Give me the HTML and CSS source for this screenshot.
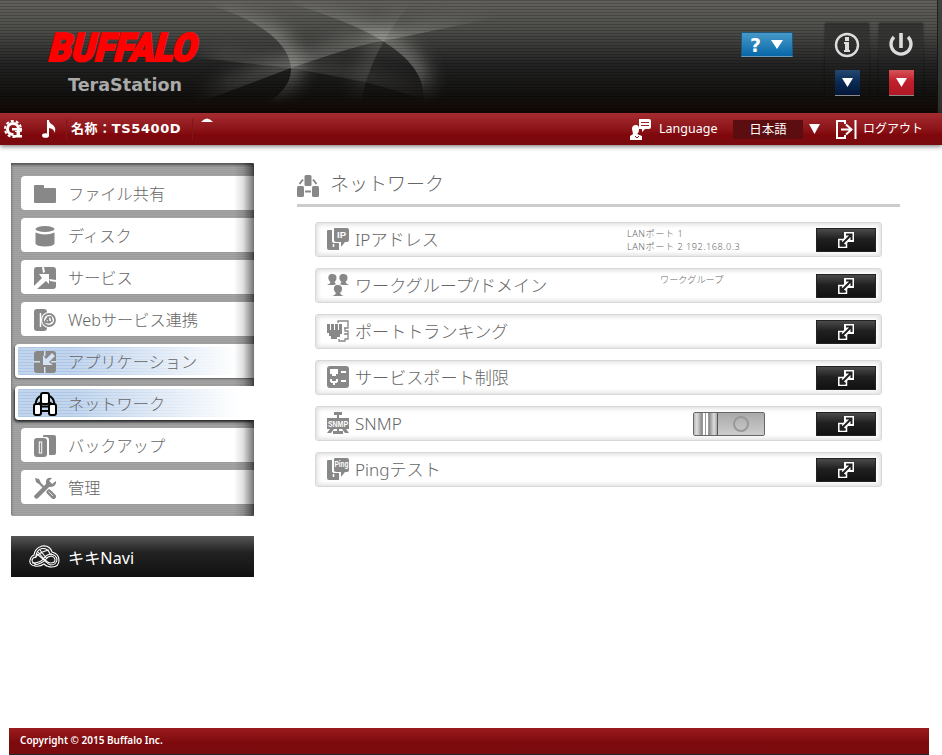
FILE: index.html
```html
<!DOCTYPE html>
<html lang="ja">
<head>
    <meta charset="UTF-8">
    <title>TeraStation</title>
    <link rel="stylesheet" href="styles.css">
</head>
<body>

<!-- Icon set -->
<svg class="sprite" width="0" height="0">
    <symbol id="i-folder" viewBox="0 0 22 22"><path d="M0 3q0-1 1-1h8q1 0 1 1v2h11q1 0 1 1v13q0 1-1 1H1q-1 0-1-1z"/></symbol>
    <symbol id="i-disk" viewBox="0 0 22 22"><ellipse cx="11" cy="4" rx="9.5" ry="3"/><path d="M1.500 7.500q9.500 4 19 0v11q-1 3-9.500 3t-9.500-3z"/></symbol>
    <symbol id="i-service" viewBox="0 0 22 22"><rect width="22" height="22" rx="3"/><path fill="#fff" d="M5 7h10v10l-3-3-9 8H0v-3l8-8zM8 0h2l1 5-2 1zM15 12l7 1v2l-6-1z"/></symbol>
    <symbol id="i-web" viewBox="0 0 22 22"><rect width="13" height="22" rx="3"/><path d="M6.500 4v14" stroke="#fff" stroke-width="1.500"/><circle cx="15" cy="11" r="8" fill="#fff"/><circle cx="15" cy="11" r="6" fill="none" stroke="#888" stroke-width="1.800"/><path d="M11 13l3-5 3 0 1 4-3 2zM14 8l1 6M11 13h4" fill="none" stroke="#888" stroke-width="1.600"/></symbol>
    <symbol id="i-app" viewBox="0 0 22 22"><rect width="22" height="22" rx="3"/><path fill="#d5e2f2" d="M9 4v10h10l-4-3 6-6-3-3-6 6zM10 0h1.500v5H10zM0 10h6v1.500H0zM10 16h1.500v6H10zM17 10h5v1.500h-5z"/></symbol>
    <symbol id="i-network" viewBox="0 0 22 22"><rect x="7.500" width="7" height="11" rx="1.500"/><rect y="11" width="7" height="11" rx="1.500"/><rect x="15" y="11" width="7" height="11" rx="1.500"/><path d="M6 4.500L2.500 9M16 4.500L19.500 9M8 16.500h6" fill="none" stroke="#888" stroke-width="2"/></symbol>
    <symbol id="i-network-on" viewBox="0 0 24 24"><path d="M7 4Q2 8 3 13M17 4q5 4 4 9M8 14.500h8M8 19h8M5 12l4-2M19 12l-4-2" fill="none" stroke="#000" stroke-width="2"/><g fill="#fff" stroke="#000" stroke-width="2"><rect x="8" y="1" width="8" height="11" rx="2"/><rect x="1" y="12" width="7" height="11" rx="2"/><rect x="16" y="12" width="7" height="11" rx="2"/></g></symbol>
    <symbol id="i-backup" viewBox="0 0 22 22"><path d="M9 1q0-1 1-1h10q2 0 2 2v16q0 2-2 2h-5V5q0-3-3-3H9z"/><rect y="3" width="13" height="19" rx="3"/><rect x="5.300" y="7" width="2.400" height="11" fill="none" stroke="#fff"/></symbol>
    <symbol id="i-tools" viewBox="0 0 22 22"><path d="M1 1l4 1 2 4 5 5-1.500 1.500-5-5L2 5z"/><path d="M15 15l4.500 4.500" stroke="#888" stroke-width="5" stroke-linecap="round"/><path d="M14.500 14.500l4.500 4.500" stroke="#fff" stroke-width=".8"/><path d="M2.500 19.500L15 7" stroke="#888" stroke-width="4.500" stroke-linecap="round"/><path d="M18 1q-5-1-6 3-1 5 4 6 5 0 6-4V4l-4 3-3-3z"/></symbol>
    <symbol id="i-ip" viewBox="0 0 22 22"><path d="M0 3q0-1 1-1h4v12h7v8H2q-2 0-2-2z"/><path d="M8 0h12q2 0 2 2v10q0 2-2 2h-2l-4 5v-5H9q-2 0-2-2V1q0-1 1-1z"/><path d="M6 2v12.500h6.500V20" fill="none" stroke="#fff"/><path d="M6.500 16v3" stroke="#fff" stroke-width="1.500"/></symbol>
    <symbol id="i-group" viewBox="0 0 22 22"><g id="person"><path d="M5.500 0C2 0 1 2 1.500 5q.5 2 2 3-.5 2-3.500 3h11q-3-1-3.500-3Q10 6 9.500 3 9 0 5.500 0z"/></g><use href="#person" x="11"/><path d="M4 22V14q2-4 7-4t7 4v8z" fill="#fff"/><use href="#person" x="5.500" y="11"/></symbol>
    <symbol id="i-trunk" viewBox="0 0 22 22"><path d="M0 4h3v6h1V4h3v6h1V4h3v6h1V4h3v10h-2v3h-3v2H4v-3H2v-3H0z"/><path d="M11 3V1h10v7h-3v3h3v8h-3v2h-6v-2M17 8h4M17 14h4" fill="none" stroke="#888" stroke-width="1.300"/></symbol>
    <symbol id="i-port" viewBox="0 0 22 22"><rect width="22" height="22" rx="3"/><path fill="#fff" d="M3 3h8v5H9v2H5V8H3zM3 13h2v3H3zM9 13h2v3H9zM4 15h6v2H8v2H6v-2H4zM14 5h5v2h-5zM14 14h5v2h-5z"/></symbol>
    <symbol id="i-snmp" viewBox="0 0 22 22"><path d="M7 0h8v3h-3v3H10V3H7zM0 6h22v11H0zM10 17h2v2h4v3H6v-3h4zM3 17h4l-3 4H0zM15 17h4l3 4h-4z"/></symbol>
    <symbol id="i-open" viewBox="0 0 16 16"><path d="M.8 7.500h7.700v7.700H.8z" fill="none" stroke="#fff" stroke-width="1.500"/><path d="M6 0h10v10H10L7 13 3.500 9.500 6 6z" fill="#fff"/><path d="M3.500 9l4 4-1 1.500H2V9z" fill="#222"/><path d="M8 2.500h5.500V8M13 3L4 12" fill="none" stroke="#222" stroke-width="2"/></symbol>
</svg>

<header class="header">
    <svg class="header-art" width="942" height="113" viewBox="0 0 942 113">
        <defs>
            <filter id="glow" filterUnits="userSpaceOnUse" x="100" y="-60" width="500" height="240"><feGaussianBlur stdDeviation="11"/></filter>
            <linearGradient id="fade" x1="0" x2="0" y1="0" y2="1"><stop offset="0" stop-color="#fff" stop-opacity=".1"/><stop offset=".3" stop-color="#fff"/><stop offset=".6" stop-color="#fff"/><stop offset=".93" stop-color="#000"/></linearGradient>
            <linearGradient id="sides" gradientUnits="userSpaceOnUse" x1="190" x2="500" y1="0" y2="0"><stop offset="0"/><stop offset=".12" stop-opacity="0"/><stop offset=".75" stop-opacity="0"/><stop offset="1"/></linearGradient>
            <mask id="fademask" maskUnits="userSpaceOnUse" x="0" y="0" width="942" height="113"><rect width="942" height="113" fill="url(#fade)"/><rect width="942" height="113" fill="url(#sides)"/></mask>
            <clipPath id="c1"><path d="M205 4C262 20 291 45 291 70Q290 90 265 104V113H560V-20H205z"/></clipPath>
            <clipPath id="c2"><path d="M293 4C370 28 424 55 424 98L423 113H600V-20H293z"/></clipPath>
            <clipPath id="c3"><path d="M190 106L291 68Q360 44 383 41L500 17V-20H190z"/></clipPath>
            <clipPath id="c4"><path d="M190 57L291 68 365 82 424 99V-20H190z"/></clipPath>
            <clipPath id="c5"><path d="M410 4Q368 55 361 104H200V0z"/></clipPath>
        </defs>
        <g mask="url(#fademask)" fill="none" stroke="#c6c6c0" stroke-width="12">
            <g clip-path="url(#c1)" opacity=".85"><path filter="url(#glow)" d="M205 4C262 20 291 45 291 70Q290 90 265 104"/></g>
            <g clip-path="url(#c2)" opacity=".85"><path filter="url(#glow)" d="M293 4C370 28 424 55 424 98"/></g>
            <g clip-path="url(#c3)" opacity=".65"><path filter="url(#glow)" d="M170 112L291 68Q360 44 383 41L520 13"/></g>
            <g clip-path="url(#c4)" opacity=".4"><path filter="url(#glow)" d="M170 55L291 68 365 82 424 99"/></g>
            <g clip-path="url(#c5)" opacity=".4"><path filter="url(#glow)" d="M410 4Q368 55 361 104"/></g>
        </g>
    </svg>

    <div class="brand">
        <svg width="190" height="70" viewBox="0 0 190 70">
            <text class="logo" transform="translate(4 35) skewX(-14)" textLength="148" lengthAdjust="spacingAndGlyphs">BUFFALO</text>
            <text class="product" x="25" y="65" textLength="114" lengthAdjust="spacingAndGlyphs">TeraStation</text>
        </svg>
    </div>

    <div class="tools">
        <div class="help">
            <span>?</span>
            <svg width="12" height="9"><path d="M0 0h12L6 9z" fill="#fff"/></svg>
        </div>
        <div class="tool">
            <svg width="26" height="26" viewBox="0 0 26 26"><circle cx="13" cy="13" r="11" fill="none" stroke="#ddd" stroke-width="2.400"/><path fill="#ddd" d="M11 5h4v4h-4zM10 10h5v8h1v2h-6v-2h1v-6h-1z"/></svg>
            <div class="drop blue"><svg width="11" height="9"><path d="M0 0h11L5.500 9z" fill="#fff"/></svg></div>
        </div>
        <div class="tool">
            <svg width="26" height="26" viewBox="0 0 26 26"><path d="M6 5a10 10 0 1 0 14 0" fill="none" stroke="#ddd" stroke-width="3.300"/><path d="M13 1v15" stroke="#ddd" stroke-width="3.600"/></svg>
            <div class="drop red"><svg width="11" height="9"><path d="M0 0h11L5.500 9z" fill="#fff"/></svg></div>
        </div>
    </div>
</header>

<div class="bar">
    <svg class="gear" width="20" height="20" viewBox="0 0 20 20"><circle cx="9" cy="9" r="5.500" fill="none" stroke="#fff" stroke-width="3"/><circle cx="9" cy="9" r="8" fill="none" stroke="#fff" stroke-width="2" stroke-dasharray="3 2.030"/><path d="M8 8h10v2.500H8zM11 11h5v4h2v2.500H9V15h2z" fill="#fff"/><path d="M9.500 12h3v3h-3z" fill="#8f161a"/></svg>
    <svg class="note" width="15" height="18" viewBox="0 0 15 18"><ellipse cx="3.500" cy="15.500" rx="3.500" ry="2.300" fill="#fff"/><path d="M5 0h2q0 3 4 5 4 4 1 8 1-4-5-5v8H5z" fill="#fff"/></svg>
    <div class="name">名称：TS5400D</div>
    <svg class="bump" width="12" height="5"><path d="M0 4Q6-3 12 4z" fill="#fff"/></svg>
    <div class="bar-right">
        <svg width="21" height="21" viewBox="0 0 21 21"><path d="M9 0h10q2 0 2 2v6q0 2-2 2h-4l-3 3v-3H9z" fill="#fff"/><path d="M11 3.500h8M11 6.500h8" stroke="#9b2226"/><path d="M2 10q0-4 4-4 3 0 3 4t-2 5l5 2v4H0v-4l3-2z" fill="#fff"/><path d="M5 17l2 2 2-2" stroke="#8b1519" fill="none"/></svg>
        <span class="language">Language</span>
        <span class="select">日本語</span>
        <svg class="arrow" width="11" height="10"><path d="M0 0h11L5.500 10z" fill="#fff"/></svg>
        <svg class="exit" width="21" height="19" viewBox="0 0 21 19"><path d="M9 4V1H1v17h8v-3M5 9.500h10M10 4.500l5.500 5-5.500 5" fill="none" stroke="#fff" stroke-width="2"/><path d="M19.500 0v19" stroke="#fff" stroke-width="2"/></svg>
        <span class="logout">ログアウト</span>
    </div>
</div>

<div class="main">
    <div class="side">
        <ul class="menu">
            <li><svg><use href="#i-folder"/></svg>ファイル共有</li>
            <li><svg><use href="#i-disk"/></svg>ディスク</li>
            <li><svg><use href="#i-service"/></svg>サービス</li>
            <li><svg><use href="#i-web"/></svg>Webサービス連携</li>
            <li class="hover"><svg><use href="#i-app"/></svg>アプリケーション</li>
            <li class="active"><svg><use href="#i-network-on"/></svg>ネットワーク</li>
            <li><svg><use href="#i-backup"/></svg>バックアップ</li>
            <li><svg><use href="#i-tools"/></svg>管理</li>
        </ul>
        <div class="navi">
            <svg width="31" height="23" viewBox="0 0 31 23" fill="none" stroke="#fff" stroke-width="1.100"><path d="M6 21Q0 20 1 15q1-4 4-5Q6 3 13 1q8-1 10 6 7 2 7 8 0 7-7 7-5 0-8-3-4 3-9 2z"/><path d="M7 19q-4-1-4-4 1-3 4-3Q7 5 13 3.500 19 3 21 9q7 1 7 6-1 5-6 5-4-1-8-6l-6-5"/><path d="M3 18q9 0 12-5 3-4 8-4M5 20q8-1 12-6 2-3 6-3M9 7l7 8q3 3 6 3 4 0 4-3t-4-4M11 5l7 9M6 13q4-6 14-8"/></svg>
            キキNavi
        </div>
    </div>

    <div class="content">
        <h1><svg width="22" height="22"><use href="#i-network"/></svg>ネットワーク</h1>
        <div class="rows">
            <div class="row">
                <svg class="icon" viewBox="0 0 22 22"><use href="#i-ip"/><text x="14.500" y="10" font-size="9" textLength="9" lengthAdjust="spacingAndGlyphs">IP</text></svg>
                <span class="label">IPアドレス</span>
                <span class="info ports">LANポート 1<br>LANポート 2 192.168.0.3</span>
                <span class="button"><svg><use href="#i-open"/></svg></span>
            </div>
            <div class="row">
                <svg class="icon"><use href="#i-group"/></svg>
                <span class="label">ワークグループ/ドメイン</span>
                <span class="info">ワークグループ</span>
                <span class="button"><svg><use href="#i-open"/></svg></span>
            </div>
            <div class="row">
                <svg class="icon"><use href="#i-trunk"/></svg>
                <span class="label">ポートトランキング</span>
                <span class="button"><svg><use href="#i-open"/></svg></span>
            </div>
            <div class="row">
                <svg class="icon"><use href="#i-port"/></svg>
                <span class="label">サービスポート制限</span>
                <span class="button"><svg><use href="#i-open"/></svg></span>
            </div>
            <div class="row">
                <svg class="icon" viewBox="0 0 22 22"><use href="#i-snmp"/><text x="11" y="14.500" font-size="8.500" textLength="20" lengthAdjust="spacingAndGlyphs">SNMP</text></svg>
                <span class="label">SNMP</span>
                <span class="switch"><span class="knob"></span><span class="off"></span></span>
                <span class="button"><svg><use href="#i-open"/></svg></span>
            </div>
            <div class="row">
                <svg class="icon" viewBox="0 0 22 22"><use href="#i-ip"/><text x="14.500" y="9" font-size="9" textLength="14" lengthAdjust="spacingAndGlyphs">Ping</text></svg>
                <span class="label">Pingテスト</span>
                <span class="button"><svg><use href="#i-open"/></svg></span>
            </div>
        </div>
    </div>
</div>

<footer class="footer">Copyright © 2015 Buffalo Inc.</footer>

</body>
</html>
```
FILE: styles.css
```css
* {
    box-sizing: border-box;
}
body {
    margin: 0;
    height: 755px;
    overflow: hidden;
    display: flex;
    flex-direction: column;
    background-color: #fff;
    color: #666;
    font-family: "Noto Sans", "Noto Sans CJK JP", sans-serif;
    font-weight: 300;
}
svg {
    display: block;
    flex: none;
}
.sprite {
    position: absolute;
}

/* Header */
.header {
    position: relative;
    height: 113px;
    flex: none;
    display: flex;
    justify-content: space-between;
    background: linear-gradient(#62615d 0, #4c4c49 30px, #222 65px, #12110f 95px, #140a06 113px);
}
.header::after {
    content: "";
    position: absolute;
    inset: 0;
    background: repeating-linear-gradient(rgba(0, 0, 0, 0.24) 0 1px, transparent 1px 3px);
    border-right: 4px solid #393937;
    box-shadow: inset -1px 0 #111;
    opacity: 0.8;
}
.header-art {
    position: absolute;
    left: 0;
    top: 0;
}
.brand {
    position: relative;
    z-index: 1;
    padding: 26px 0 0 43px;
}
.logo {
    font: 900 39px Roboto, "Liberation Sans", sans-serif;
    fill: #f00;
    stroke: #f00;
    stroke-width: 2px;
}
.product {
    font: bold 18px "DejaVu Sans", sans-serif;
    fill: #aaa;
}
.tools {
    position: relative;
    z-index: 1;
    display: flex;
    padding: 24px 19px 0 0;
}
.help {
    display: flex;
    align-items: center;
    justify-content: space-between;
    width: 52px;
    height: 25px;
    margin: 8px 32px 0 0;
    padding: 0 9px 0 8px;
    border: 1px solid #1d577e;
    border-bottom-color: #6b9cba;
    background: linear-gradient(#4799c9, #0868a9);
    color: #fff;
    font: bold 19px/22px "DejaVu Sans", sans-serif;
}
.tool {
    width: 44px;
    height: 73px;
    margin-right: 10px;
    padding-top: 8px;
    display: flex;
    flex-direction: column;
    align-items: center;
    background: linear-gradient(rgba(35, 35, 35, 0.65), transparent 52px);
    box-shadow: 0 -1px 2px rgba(0, 0, 0, 0.55);
}
.tool:last-child {
    margin-right: 0;
}
.drop {
    width: 25px;
    height: 26px;
    margin-top: 12px;
    display: flex;
    align-items: center;
    justify-content: center;
    border-bottom: 1px solid #8c8c8c;
}
.blue {
    background: linear-gradient(#274870, #0b2c57 45%, #041637);
}
.red {
    background: linear-gradient(#d55459, #c01f2b 45%, #ad1924);
}

/* Red status bar */
.bar {
    position: relative;
    height: 32px;
    flex: none;
    display: flex;
    align-items: center;
    background: linear-gradient(#a52c31, #8c1519 50%, #7f070c 70%, #780b0e);
    box-shadow: 0 1px 5px rgba(0, 0, 0, 0.6);
    color: #fff;
}
.gear {
    margin: 1px 0 0 4px;
}
.note {
    margin-left: 18px;
}
.name {
    width: 127px;
    margin-left: 9px;
    padding: 0 0 2px 4px;
    border: solid #7c171b;
    border-width: 0 1px;
    font: bold 13px/19px "DejaVu Sans", "Noto Sans CJK JP", sans-serif;
    letter-spacing: 0.6px;
    white-space: nowrap;
}
.bump {
    align-self: flex-start;
    margin: 5px 0 0 8px;
}
.bar-right {
    display: flex;
    align-items: center;
    margin-left: auto;
    padding-right: 19px;
    font-weight: 400;
    font-size: 12.500px;
    line-height: 20px;
}
.language {
    width: 57px;
    margin: 0 17px 0 8px;
}
.select {
    width: 70px;
    height: 19px;
    line-height: 19px;
    text-align: center;
    background: #5c0d10;
}
.arrow {
    margin: 0 8px 0 6px;
}
.exit {
    margin-left: 8px;
}
.logout {
    font-size: 12px;
    margin-left: 6px;
    white-space: nowrap;
}

.main {
    flex: 1;
    display: flex;
    padding-top: 18px;
}

/* Side menu */
.side {
    width: 243px;
    margin-left: 11px;
}
.menu {
    position: relative;
    list-style: none;
    height: 353px;
    margin: 0 0 20px;
    padding: 13px 0 0 10px;
    display: flex;
    flex-direction: column;
    gap: 8px;
    background: repeating-linear-gradient(#a4a4a4 0 1px, #9b9b9b 1px 2px);
    box-shadow: inset 0 2px 3px rgba(0, 0, 0, 0.5);
    border-radius: 0 3px 2px 2px;
}
.menu::after {
    content: "";
    position: absolute;
    top: 0;
    right: 0;
    bottom: 0;
    width: 20px;
    background: linear-gradient(to right, transparent, rgba(0, 0, 0, 0.12) 45%, rgba(0, 0, 0, 0.55));
}
.menu li {
    height: 34px;
    flex: none;
    display: flex;
    align-items: center;
    gap: 12px;
    padding: 1px 0 0 13px;
    border-radius: 4px 0 0 4px;
    background-color: #fff;
    font-size: 16.200px;
    line-height: 30px;
}
.menu svg {
    width: 22px;
    height: 22px;
    fill: #888;
}
.menu li.hover,
.menu li.active {
    margin-left: -6px;
    padding-left: 16px;
    border: solid #fff;
    border-width: 3px 0 3px 3px;
    background: linear-gradient(to right, transparent 50px, #fff 220px), repeating-linear-gradient(#adc7e7 0 1px, #c2d5ed 1px 3px);
    box-shadow: -1px 1px 2px rgba(0, 0, 0, 0.4);
}
.menu li.active {
    padding-left: 15px;
    gap: 11px;
    box-shadow: -1px 2px 3px rgba(0, 0, 0, 0.8);
    clip-path: inset(-4px 0 -6px -4px);
    position: relative;
    z-index: 1;
}
.menu li.active svg {
    width: 24px;
    height: 24px;
}
.navi {
    height: 41px;
    display: flex;
    align-items: center;
    gap: 8px;
    padding-left: 18px;
    background: linear-gradient(#555, #222 40%, #111);
    color: #fff;
    font-size: 16.200px;
    font-weight: 400;
}

/* Content */
.content {
    width: 603px;
    margin: 9px 0 0 43px;
}
h1 {
    display: flex;
    align-items: center;
    gap: 11px;
    height: 35px;
    margin: 0 0 15px;
    padding-bottom: 8px;
    border-bottom: 3px solid #ccc;
    font-size: 19px;
    font-weight: 300;
    line-height: 24px;
}
h1 svg {
    fill: #888;
    position: relative;
    top: 2px;
}
.rows {
    display: flex;
    flex-direction: column;
    gap: 11px;
    margin: 0 18px;
}
.row {
    height: 35px;
    display: flex;
    align-items: center;
    padding: 0 5px 0 11px;
    border: 1px solid #d8d8d8;
    border-radius: 3px;
    box-shadow: inset 0 0 4px 2px #e2e2e2;
}
.icon {
    width: 22px;
    height: 22px;
    margin-right: 6px;
    margin-bottom: 2px;
    fill: #888;
    overflow: visible;
}
.icon text {
    fill: #fff;
    font-family: "Liberation Sans", sans-serif;
    font-weight: bold;
    text-anchor: middle;
}
.label {
    flex: 1;
    font-size: 17.100px;
    line-height: 24px;
    white-space: nowrap;
}
.info {
    width: 156px;
    font-size: 9.200px;
    line-height: 13px;
    align-self: flex-start;
    padding-top: 4px;
}
.info.ports {
    width: 189px;
    letter-spacing: 0.500px;
}
.button {
    width: 60px;
    height: 24px;
    display: flex;
    align-items: center;
    justify-content: center;
    background: linear-gradient(#4b4b4b, #202020 45%, #111);
    border: 1px solid #222;
}
.button svg {
    width: 16px;
    height: 16px;
}
.switch {
    width: 72px;
    height: 24px;
    margin-right: 51px;
    display: flex;
    border: 1px solid #666;
    border-radius: 2px;
    background: linear-gradient(#aaa, #ccc);
}
.knob {
    width: 24px;
    border-right: 1px solid #555;
    background: linear-gradient(to right, #bbb, #ddd 3px, #888 8px, transparent 8px 15px, #888 15px, #ddd 20px, #aaa), repeating-linear-gradient(to right, #fff 0 2px, #999 2px 3px);
}
.off {
    width: 16px;
    height: 16px;
    margin: 3px 0 0 15px;
    border: 2px solid #999;
    border-radius: 50%;
}

.footer {
    height: 27px;
    flex: none;
    margin: 0 13px 0 9px;
    padding-left: 11px;
    border-bottom: 1px solid #292330;
    background: linear-gradient(#9b1b1e, #7d0a0d 55%, #790b0e);
    color: #fff;
    font-size: 10px;
    font-weight: 600;
    line-height: 24px;
}
```
